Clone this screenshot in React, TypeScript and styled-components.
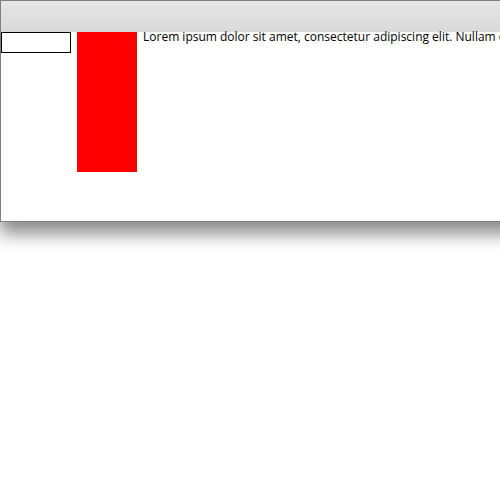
import React from "react";
import styled, { createGlobalStyle } from "styled-components";

const Global = createGlobalStyle`
  html, body { margin: 0; padding: 0; background: #fff; }
  body { font-family: "Open Sans", sans-serif; }
`;

const Stage = styled.div`
  width: 100%;
  overflow-x: clip;
  padding-bottom: 40px;
`;

const Window = styled.div`
  width: 700px;
  border: 1px solid #7f7f7f;
  background: #fff;
  box-shadow: 0 12px 16px rgba(0, 0, 0, 0.45);
`;

const TitleBar = styled.div`
  height: 31px;
  background: linear-gradient(#e6e6e6, #d9d9d9);
`;

const Content = styled.div`
  height: 189px;
  display: flex;
  align-items: flex-start;
`;

const Field = styled.div`
  width: 68px;
  height: 19px;
  border: 1px solid #000;
  background: #fff;
  flex: none;
`;

const Block = styled.div`
  width: 60px;
  height: 140px;
  background: #ff0000;
  margin-left: 6px;
  flex: none;
`;

const Text = styled.p`
  margin: -4px 0 0 6px;
  font-family: "Open Sans", sans-serif;
  font-size: 12px;
  line-height: 18px;
  color: #000;
  white-space: nowrap;
`;

export default function App() {
  return (
    <>
      <Global />
      <Stage>
        <Window>
          <TitleBar />
          <Content>
            <Field />
            <Block />
            <Text>Lorem ipsum dolor sit amet, consectetur adipiscing elit. Nullam ornare.</Text>
          </Content>
        </Window>
      </Stage>
    </>
  );
}
